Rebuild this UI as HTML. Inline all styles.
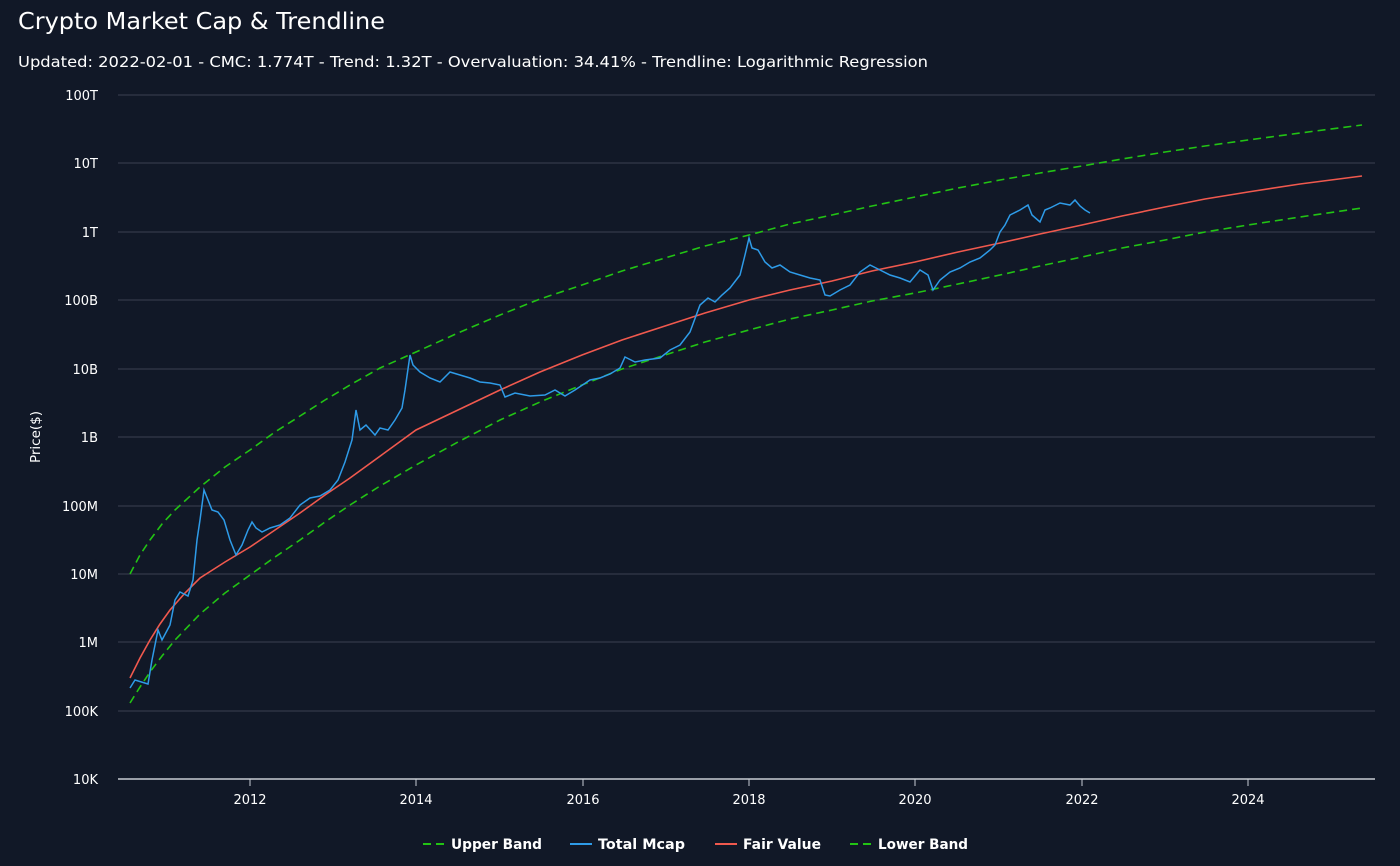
<!DOCTYPE html><html><head><meta charset="utf-8"><style>
body{margin:0;background:#111827;width:1400px;height:866px;overflow:hidden;font-family:"DejaVu Sans",sans-serif;color:#fff}
</style></head><body>
<svg width="1400" height="866" style="position:absolute;left:0;top:0" font-family="DejaVu Sans, sans-serif">
<text x="18" y="29" font-size="23" fill="#fff" textLength="367" lengthAdjust="spacingAndGlyphs">Crypto Market Cap &amp; Trendline</text>
<text x="18" y="67" font-size="15.5" fill="#fff" textLength="910" lengthAdjust="spacingAndGlyphs">Updated: 2022-02-01 - CMC: 1.774T - Trend: 1.32T - Overvaluation: 34.41% - Trendline: Logarithmic Regression</text>
<g stroke="#3a4150" stroke-width="1">
<line x1="118" x2="1375" y1="95" y2="95"/><line x1="118" x2="1375" y1="163" y2="163"/><line x1="118" x2="1375" y1="232" y2="232"/><line x1="118" x2="1375" y1="300" y2="300"/><line x1="118" x2="1375" y1="369" y2="369"/><line x1="118" x2="1375" y1="437" y2="437"/><line x1="118" x2="1375" y1="506" y2="506"/><line x1="118" x2="1375" y1="574" y2="574"/><line x1="118" x2="1375" y1="642" y2="642"/><line x1="118" x2="1375" y1="711" y2="711"/>
</g>
<line x1="118" x2="1375" y1="779" y2="779" stroke="#c8ccd4" stroke-width="1.5"/>
<g stroke="#c8ccd4"><line x1="250" x2="250" y1="779" y2="786"/><line x1="416" x2="416" y1="779" y2="786"/><line x1="583" x2="583" y1="779" y2="786"/><line x1="749" x2="749" y1="779" y2="786"/><line x1="915" x2="915" y1="779" y2="786"/><line x1="1082" x2="1082" y1="779" y2="786"/><line x1="1248" x2="1248" y1="779" y2="786"/></g>
<g font-size="13" fill="#fff" text-anchor="end">
<text x="98" y="100">100T</text><text x="98" y="168">10T</text><text x="98" y="237">1T</text><text x="98" y="305">100B</text><text x="98" y="374">10B</text><text x="98" y="442">1B</text><text x="98" y="511">100M</text><text x="98" y="579">10M</text><text x="98" y="647">1M</text><text x="98" y="716">100K</text><text x="98" y="784">10K</text>
</g>
<g font-size="13" fill="#fff" text-anchor="middle">
<text x="250" y="804">2012</text><text x="416" y="804">2014</text><text x="583" y="804">2016</text><text x="749" y="804">2018</text><text x="915" y="804">2020</text><text x="1082" y="804">2022</text><text x="1248" y="804">2024</text>
</g>
<text transform="translate(40,437) rotate(-90)" font-size="13.5" fill="#fff" text-anchor="middle">Price($)</text>
<g fill="none" stroke-width="1.6">
<polyline stroke="#22c314" stroke-dasharray="8,5" points="130,574 140,555 150,540 162,524 175,510 200,487 225,467 250,450 275,432 300,416 325,400 350,385 380,368 416,352 458,333 500,315 540,299 582,285 622,271 665,258 705,246 749,235 790,224 832,215 872,206 915,197 958,188 1000,180 1040,173 1082,166 1122,159 1165,152 1205,146 1248,140 1300,133 1362,125"/>
<polyline stroke="#22c314" stroke-dasharray="8,5" points="130,703 140,687 150,672 162,656 175,640 200,614 225,593 250,575 275,557 300,540 325,522 350,505 380,486 416,465 458,442 500,420 540,402 582,385 622,369 665,355 705,342 749,330 790,319 832,310 872,301 915,293 958,284 1000,275 1040,266 1082,257 1122,248 1165,240 1205,232 1248,225 1300,217 1362,208"/>
<polyline stroke="#f0594e" points="130,678 140,658 150,640 160,624 170,610 185,593 200,578 225,562 250,547 275,530 300,513 325,495 350,478 383,454 416,430 458,410 500,390 540,372 582,355 622,340 665,326 705,313 749,300 790,290 832,281 872,271 915,262 958,252 1000,243 1040,234 1082,225 1122,216 1165,207 1205,199 1248,192 1300,184 1362,176"/>
<polyline stroke="#2e9be8" stroke-width="1.5" points="130,688 135,680 148,684 152,660 158,630 162,640 170,625 175,600 180,592 188,596 193,580 197,540 200,520 204,490 208,500 212,510 218,512 224,520 230,540 236,555 242,545 248,530 252,522 256,528 262,532 270,528 280,525 290,518 300,505 310,498 320,496 330,490 338,480 345,462 352,440 356,410 360,430 366,425 375,435 380,428 388,430 395,420 402,408 405,390 410,355 413,365 420,372 430,378 440,382 450,372 460,375 470,378 480,382 490,383 500,385 505,397 515,393 530,396 545,395 555,390 565,396 575,390 590,380 600,378 610,374 620,368 625,357 635,362 645,360 660,358 670,350 680,345 690,332 700,305 708,298 715,302 722,295 730,288 740,275 745,255 749,238 752,248 758,250 765,262 772,268 780,265 790,272 800,275 810,278 820,280 825,295 830,296 840,290 850,285 860,272 870,265 880,270 890,275 900,278 910,282 920,270 928,275 933,290 940,280 950,272 960,268 970,262 980,258 990,250 995,245 1000,232 1005,225 1010,215 1020,210 1028,205 1032,215 1040,222 1045,210 1050,208 1060,203 1070,205 1075,200 1080,206 1085,210 1090,213"/>
</g>
<g font-size="14" font-weight="bold" fill="#fff">
<line x1="423" x2="445" y1="844" y2="844" stroke="#22c314" stroke-width="2" stroke-dasharray="8,5"/><text x="451" y="849" textLength="91" lengthAdjust="spacingAndGlyphs">Upper Band</text>
<line x1="570" x2="592" y1="844" y2="844" stroke="#2e9be8" stroke-width="2"/><text x="598" y="849" textLength="87" lengthAdjust="spacingAndGlyphs">Total Mcap</text>
<line x1="715" x2="737" y1="844" y2="844" stroke="#f0594e" stroke-width="2"/><text x="743" y="849" textLength="78" lengthAdjust="spacingAndGlyphs">Fair Value</text>
<line x1="850" x2="872" y1="844" y2="844" stroke="#22c314" stroke-width="2" stroke-dasharray="8,5"/><text x="878" y="849" textLength="90" lengthAdjust="spacingAndGlyphs">Lower Band</text>
</g>
</svg>
</body></html>
